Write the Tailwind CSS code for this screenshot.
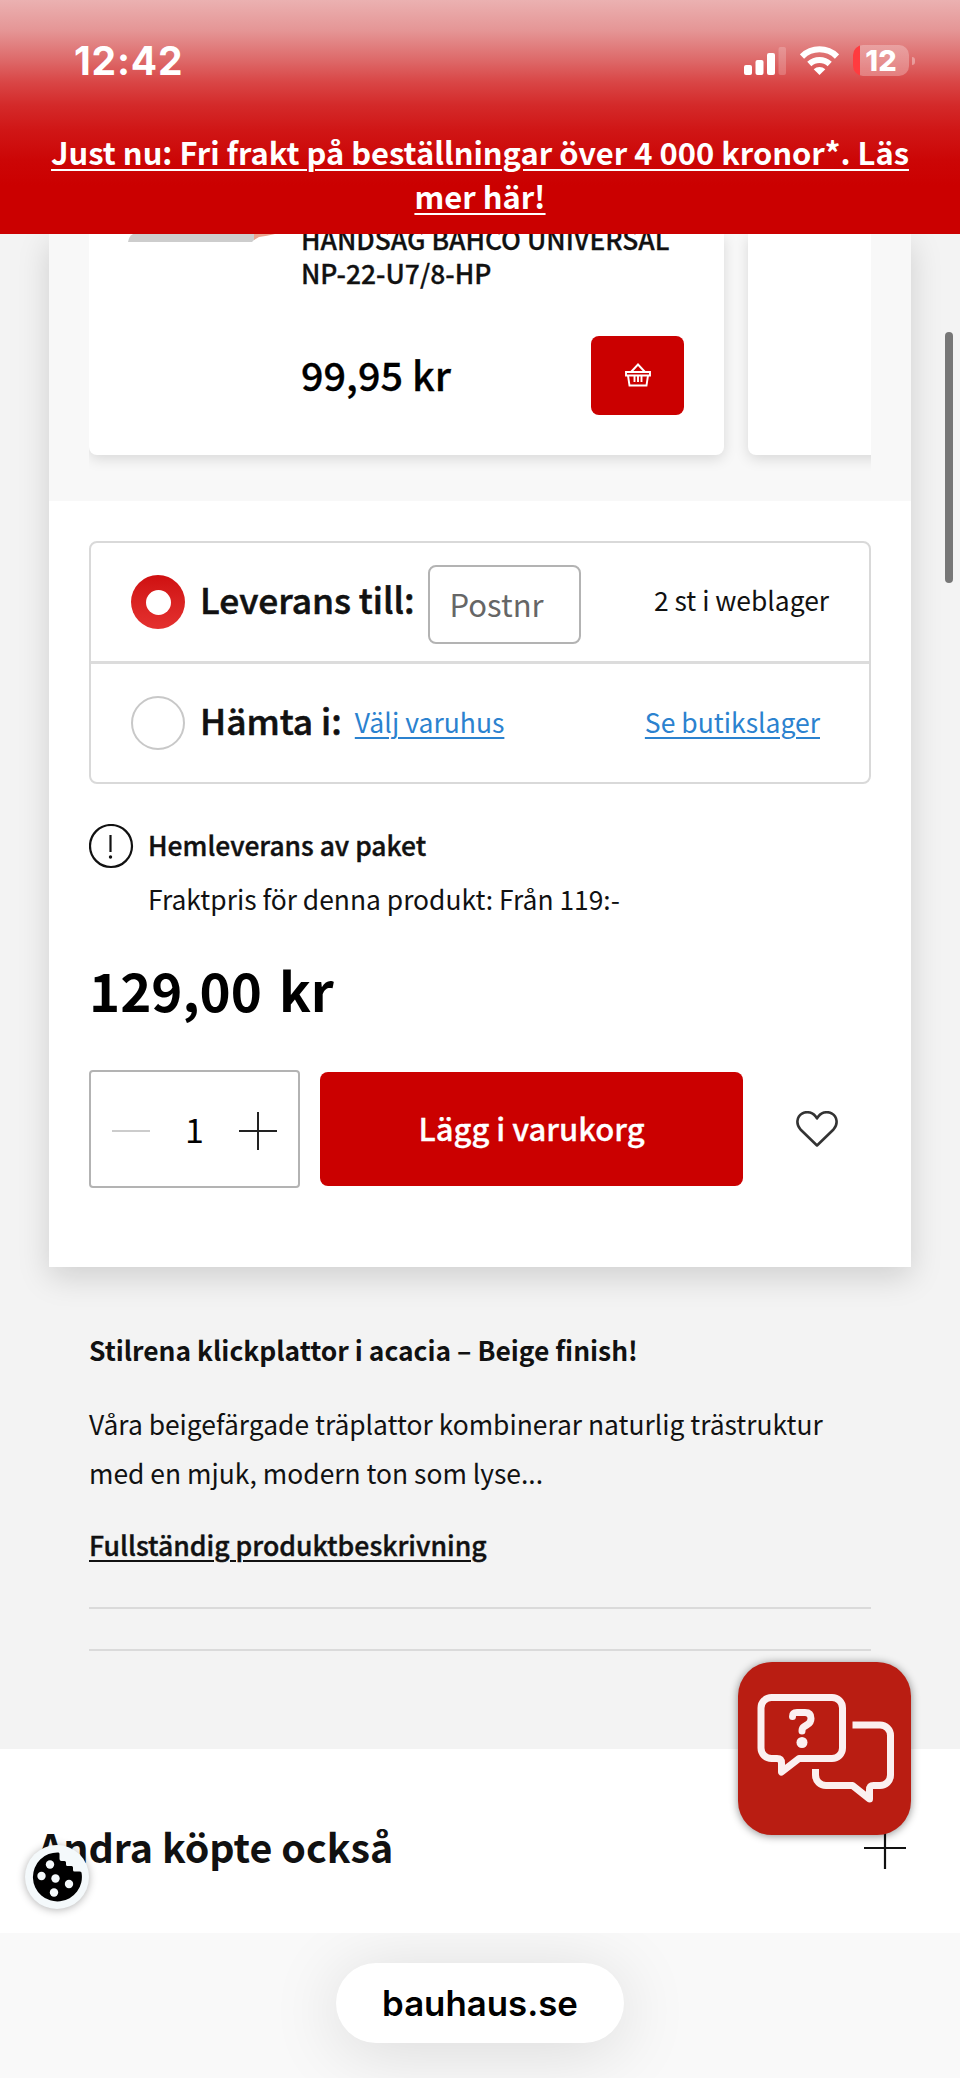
<!DOCTYPE html>
<html lang="sv">
  <head>
    <meta charset="UTF-8" />
    <meta name="viewport" content="width=device-width, initial-scale=1.0" />
    <title>bauhaus.se</title>
    <script src="https://cdn.jsdelivr.net/npm/@tailwindcss/browser@4"></script>
  </head>
  <body
    class="bg-[#f3f3f3] text-[#111] font-['Noto_Sans_CJK_SC',sans-serif] antialiased"
  >
    <div
      class="relative w-[960px] h-[2078px] overflow-hidden flex flex-col whitespace-nowrap"
    >
      <header
        class="relative z-10 h-[234px] shrink-0 text-white bg-[linear-gradient(to_bottom,#ebb1b1_0px,#e59696_30px,#de6e6e_57px,#d94646_82px,#d42a2a_105px,#d01616_130px,#cc0606_160px,#cb0000_185px)]"
      >
        <div
          class="h-[130px] pt-[39px] pl-[74px] pr-[45px] flex justify-between font-[Inter,sans-serif]"
        >
          <span class="text-[39px] leading-[44px] font-bold tracking-[0.8px]"
            >12:42</span
          >
          <div class="flex items-start gap-3.5 pt-[6px]">
            <svg class="w-[42px] h-[30px]" viewBox="0 0 42 30" fill="#fff">
              <rect x="0" y="20" width="8" height="10" rx="2" />
              <rect x="11.5" y="15" width="8" height="15" rx="2" />
              <rect x="23" y="8" width="8" height="22" rx="2" />
              <rect x="34.5" y="2" width="7.5" height="28" rx="2" opacity=".2" />
            </svg>
            <svg class="w-[39px] h-[30px]" viewBox="0 0 39 30">
              <g fill="none" stroke="#fff" stroke-width="6">
                <path d="M2 11.5a25 25 0 0 1 35 0" />
                <path d="M9.3 19a14.8 14.8 0 0 1 20.4 0" />
              </g>
              <path d="M19.5 30l-5.8-5.8a8.4 8.4 0 0 1 11.6 0z" fill="#fff" />
            </svg>
            <div class="flex items-center gap-[3px]">
              <div
                class="w-[56px] h-[31px] rounded-[10px] bg-[linear-gradient(to_right,#ff3b3f_7px,#ffffff44_7px)] text-center text-[29px] leading-[32px] font-extrabold"
              >
                12
              </div>
              <div class="w-[3px] h-[8px] rounded-r-full bg-white/35"></div>
            </div>
          </div>
        </div>
        <p
          class="text-center text-[30.9px] leading-[44px] font-bold underline decoration-2 underline-offset-[4px]"
        >
          Just nu: Fri frakt på beställningar över 4 000 kronor*. Läs<br />mer
          här!
        </p>
      </header>

      <main
        class="mx-[49px] w-[862px] h-[1033px] shrink-0 bg-white shadow-[0_10px_30px_rgba(0,0,0,0.15)]"
      >
        <section class="h-[267px] bg-[#f8f8f8] px-10">
          <div class="h-[240px] flex gap-6 overflow-hidden">
            <article
              class="w-[635px] h-[221px] shrink-0 flex bg-white rounded-b-lg shadow-[0_4px_14px_rgba(0,0,0,0.13)]"
            >
              <div class="w-[212px] shrink-0 pl-[39px]">
                <svg class="w-[150px] h-2" viewBox="0 0 150 8">
                  <path d="M0 8q1-6 5-8h123v4l-4 4z" fill="#cdcdcd" />
                  <path d="M126 0h21q-8 2-16 3l-5 3z" fill="#eaa48f" />
                </svg>
              </div>
              <div class="flex-1 pr-10">
                <h3
                  class="-mt-3 text-[26.4px] leading-[34px] font-medium [-webkit-text-stroke:0.3px]"
                >
                  HANDSÅG BAHCO UNIVERSAL<br />NP-22-U7/8-HP
                </h3>
                <div class="mt-[46px] flex items-center justify-between">
                  <span
                    class="-mt-1 text-[39.6px] leading-[76px] font-medium text-black [-webkit-text-stroke:0.3px]"
                    >99,95 kr</span
                  >
                  <button
                    class="w-[93px] h-[79px] rounded-lg bg-[#cb0000] flex items-center justify-center"
                    aria-label="Lägg i varukorg"
                  >
                    <svg
                      class="w-[26px] h-6 -mt-0.5"
                      viewBox="0 0 26 24"
                      fill="none"
                      stroke="#fff"
                      stroke-width="1.9"
                    >
                      <path d="M1 9h24v3.5H1z" />
                      <path d="M6 9l7-7.5L20 9M3 12.5l1.5 10h17l1.5-10" />
                      <path d="M9.5 13v6M13 13v6M16.5 13v6" />
                    </svg>
                  </button>
                </div>
              </div>
            </article>
            <article
              class="w-[635px] h-[221px] shrink-0 bg-white rounded-b-lg shadow-[0_4px_14px_rgba(0,0,0,0.13)]"
            ></article>
          </div>
        </section>

        <section class="px-10 pt-10">
          <div
            class="h-[243px] rounded-lg border-2 border-[#d9d9d9] flex flex-col"
          >
            <div
              class="h-[121px] pl-10 pr-10 flex items-center border-b-3 border-[#dcdcdc]"
            >
              <span
                class="w-[54px] h-[54px] rounded-full bg-linear-to-b from-[#cf0f10] to-[#e4302f] flex items-center justify-center"
                ><span class="w-[25px] h-[25px] rounded-full bg-white"></span
              ></span>
              <span
                class="ml-[15px] -mt-1.5 text-[35.3px] leading-[54px] font-medium [-webkit-text-stroke:0.6px]"
                >Leverans till:</span
              >
              <span
                class="ml-[13px] mt-1 w-[153px] h-[79px] rounded-lg border-2 border-[#b3b3b3] pl-[20px] text-[31px] leading-[74px] text-[#666]"
                >Postnr</span
              >
              <span class="ml-auto -mt-1 text-[26.4px] leading-[54px]"
                >2 st i weblager</span
              >
            </div>
            <div class="h-[118px] pl-10 pr-[49px] flex items-center">
              <span
                class="w-[54px] h-[54px] rounded-full border-2 border-[#c8c8c8]"
              ></span>
              <span
                class="ml-[15px] -mt-1.5 text-[35.3px] leading-[54px] font-medium [-webkit-text-stroke:0.6px]"
                >Hämta i:</span
              >
              <a
                class="ml-[13px] -mt-0.5 text-[26.5px] text-[#2b82cf] underline decoration-2 underline-offset-4"
                >Välj varuhus</a
              >
              <a
                class="ml-auto -mt-0.5 text-[26.5px] text-[#2b82cf] underline decoration-2 underline-offset-4"
                >Se butikslager</a
              >
            </div>
          </div>

          <div class="mt-10 flex">
            <svg
              class="w-[45px] h-[45px]"
              viewBox="0 0 45 45"
              fill="none"
              stroke="#111"
              stroke-width="2.2"
            >
              <circle cx="22" cy="22" r="21" />
              <path d="M21.5 11v17" />
              <circle cx="21.5" cy="33" r="1.7" fill="#111" stroke="none" />
            </svg>
            <div class="ml-3.5 -mt-0.5 text-[26.4px]">
              <p
                class="leading-[45px] font-medium [-webkit-text-stroke:0.4px]"
              >
                Hemleverans av paket
              </p>
              <p class="mt-[5px] leading-[54px]">
                Fraktpris för denna produkt: Från 119:-
              </p>
            </div>
          </div>
          <p
            class="mt-[25px] text-[52.8px] leading-[76px] font-bold text-black [word-spacing:5px]"
          >
            129,00 kr
          </p>

          <div class="mt-[43px] flex items-center">
            <div
              class="w-[211px] h-[118px] rounded border-2 border-[#b3b3b3] px-[21px] pt-1 flex items-center justify-between"
            >
              <span class="w-[38px] h-0.5 bg-[#ccc]"></span>
              <span class="-mt-1 text-[34px] leading-[50px] text-black">1</span>
              <svg
                class="w-[38px] h-[38px]"
                viewBox="0 0 38 38"
                stroke="#222"
                stroke-width="2"
              >
                <path d="M0 19h38M19 0v38" />
              </svg>
            </div>
            <button
              class="ml-5 w-[423px] h-[114px] rounded-lg bg-[#cb0000] text-white text-[31px] leading-[110px] pb-0.5 font-medium [-webkit-text-stroke:0.3px]"
            >
              Lägg i varukorg
            </button>
            <svg
              class="ml-[53px] w-[42px] h-9"
              viewBox="0 0 42 36"
              fill="none"
              stroke="#333"
              stroke-width="2.6"
              stroke-linejoin="round"
            >
              <path
                d="M21 34.5L4.5 18.5C-.5 13 1 5.5 6 2.6 11-.2 17.5 1 21 7.5 24.5 1 31-.2 36 2.6c5 2.900 6.5 10.400 1.500 15.900z"
              />
            </svg>
          </div>
        </section>
      </main>

      <section class="h-[482px] shrink-0 px-[89px] pt-[61px] text-[26.4px]">
        <h2 class="leading-[44px] font-bold">
          Stilrena klickplattor i acacia – Beige finish!
        </h2>
        <p class="mt-[27px] leading-[49px]">
          Våra beigefärgade träplattor kombinerar naturlig trästruktur<br />med
          en mjuk, modern ton som lyse...
        </p>
        <a
          class="mt-[26px] block leading-[44px] text-[26.6px] font-medium underline decoration-2 underline-offset-4 [-webkit-text-stroke:0.4px]"
          >Fullständig produktbeskrivning</a
        >
        <div class="mt-[40px] h-11 border-y-2 border-[#dadada]"></div>
      </section>

      <section
        class="h-[184px] shrink-0 bg-white pl-[38px] pr-[54px] pt-[14px] flex items-center justify-between"
      >
        <h2 class="-mt-1 text-[39.4px] leading-[56px] font-bold">
          Andra köpte också
        </h2>
        <svg
          class="w-[42px] h-[42px]"
          viewBox="0 0 42 42"
          stroke="#111"
          stroke-width="2.2"
        >
          <path d="M0 21h42M21 0v42" />
        </svg>
      </section>

      <footer class="h-[145px] shrink-0 bg-[#f9f9f9] pt-[30px] overflow-hidden">
        <div
          class="mx-auto w-[288px] h-20 rounded-full bg-white shadow-[0_8px_70px_rgba(0,0,0,0.13)] text-center font-[Inter,sans-serif] text-[34.8px] leading-[80px] font-semibold text-black"
        >
          bauhaus.se
        </div>
      </footer>

      <!-- Floating controls -->
      <div
        class="absolute left-[945px] top-[332px] w-2 h-[251px] rounded-full bg-[#777]"
      ></div>
      <button
        class="absolute left-[738px] top-[1662px] w-[173px] h-[173px] rounded-[34px] bg-[#b91d12] shadow-[0_1px_8px_rgba(0,0,0,0.45)]"
        aria-label="Chatt"
      >
        <svg
          class="w-[173px] h-[173px]"
          viewBox="0 0 173 173"
          fill="none"
          stroke="#fbf0f0"
          stroke-width="7"
          stroke-linejoin="round"
        >
          <path
            d="M33.5 35.5H94a10.5 10.5 0 0 1 10.5 10.5V86A10.5 10.5 0 0 1 94 96.5H61L43.5 110V101Q43.5 96.5 39 96.5H33.5A10.5 10.5 0 0 1 23 86V46a10.5 10.5 0 0 1 10.5-10.5z"
          />
          <path
            d="M114.5 63H142a10.5 10.5 0 0 1 10.5 10.5V113a10.5 10.5 0 0 1-10.5 10.5H135.5Q131.5 123.5 131.5 128V137L114.5 123.5H88A10.5 10.5 0 0 1 77.5 113V107"
          />
          <path
            d="M54.5 54.5Q54.5 50.5 59 50.5H67Q73 50.5 73 56.5 73 60.5 69.5 62.5L66 64.7Q64 66 64 69"
            stroke-linecap="round"
          />
          <circle cx="64" cy="80.5" r="5.5" fill="#fbf0f0" stroke="none" />
        </svg>
      </button>
      <button
        class="absolute left-[25px] top-[1845px] w-16 h-16 rounded-full bg-[#f4f9fb] shadow-[0_1px_8px_rgba(0,0,0,0.3)] flex items-center justify-center"
        aria-label="Cookies"
      >
        <svg class="w-[50px] h-[50px]" viewBox="0 0 50 50">
          <path
            d="M26.5 .5A24.5 24.5 0 1 0 49.5 20.500q-.5-1-2-1h-5q-1.5 0-1.5-1.5v-2.5q0-1.5-1.5-1.5h-4q-1.5 0-1.5-1.5v-2q0-1.5-1.5-1.5h-3q-2 0-2-2v-5q0-1.5-1-1.5z"
          />
          <g fill="#f4f9fb">
            <circle cx="18" cy="12.5" r="4.2" />
            <circle cx="9.5" cy="24" r="4.2" />
            <circle cx="23.5" cy="26.5" r="4.2" />
            <circle cx="37" cy="32" r="4.2" />
            <circle cx="22" cy="40.5" r="4.2" />
          </g>
        </svg>
      </button>
    </div>
  </body>
</html>
